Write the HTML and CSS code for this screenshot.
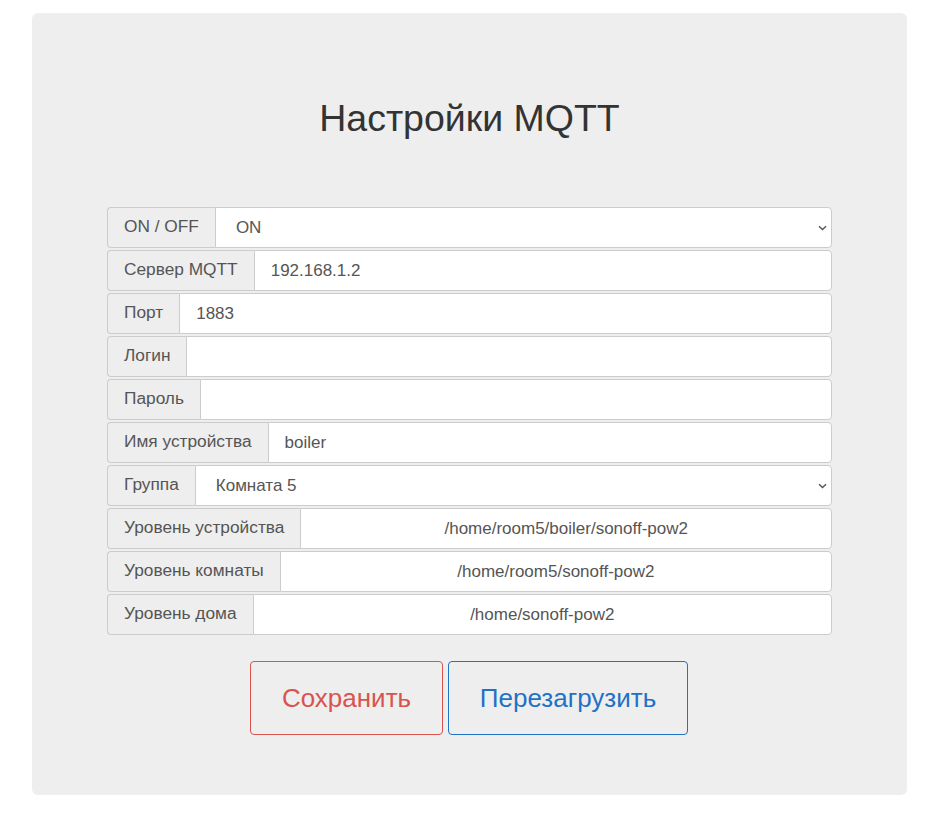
FILE: index.html
```html
<!DOCTYPE html>
<html lang="ru">
<head>
<meta charset="utf-8">
<title>Настройки MQTT</title>
<link rel="stylesheet" href="styles.css">
</head>
<body>
<div class="card">
  <h1 class="title">Настройки MQTT</h1>
  <div class="form">
    <div class="row">
      <span class="addon">ON / OFF</span>
      <div class="select-wrap">
        <select class="field select"><option>ON</option><option>OFF</option></select>
        <svg class="chev" width="9" height="6" viewBox="0 0 9 6"><path d="M1 1.2 L4.5 4.6 L8 1.2" fill="none" stroke="#555" stroke-width="1.4"/></svg>
      </div>
    </div>
    <div class="row">
      <span class="addon">Сервер MQTT</span>
      <input class="field" type="text" value="192.168.1.2">
    </div>
    <div class="row">
      <span class="addon">Порт</span>
      <input class="field" type="text" value="1883">
    </div>
    <div class="row">
      <span class="addon">Логин</span>
      <input class="field" type="text" value="">
    </div>
    <div class="row">
      <span class="addon">Пароль</span>
      <input class="field" type="password" value="">
    </div>
    <div class="row">
      <span class="addon">Имя устройства</span>
      <input class="field" type="text" value="boiler">
    </div>
    <div class="row">
      <span class="addon">Группа</span>
      <div class="select-wrap">
        <select class="field select"><option>Комната 5</option></select>
        <svg class="chev" width="9" height="6" viewBox="0 0 9 6"><path d="M1 1.2 L4.5 4.6 L8 1.2" fill="none" stroke="#555" stroke-width="1.4"/></svg>
      </div>
    </div>
    <div class="row">
      <span class="addon">Уровень устройства</span>
      <input class="field center" type="text" value="/home/room5/boiler/sonoff-pow2">
    </div>
    <div class="row">
      <span class="addon">Уровень комнаты</span>
      <input class="field center" type="text" value="/home/room5/sonoff-pow2">
    </div>
    <div class="row">
      <span class="addon">Уровень дома</span>
      <input class="field center" type="text" value="/home/sonoff-pow2">
    </div>
  </div>
  <div class="buttons">
    <button class="btn btn-save">Сохранить</button>
    <button class="btn btn-reboot">Перезагрузить</button>
  </div>
</div>
</body>
</html>
```

FILE: styles.css
```css
* { box-sizing: border-box; }
html, body { margin: 0; background: #fff; }
body {
  padding: 13px 26px 0 32px;
  font-family: "Liberation Sans", Arial, sans-serif;
  color: #333;
}
.card {
  background: #eeeeee;
  border-radius: 6px;
  height: 782px;
  padding: 84px 75px 0 75px;
}
.title {
  margin: 0;
  font-size: 37.5px;
  font-weight: 400;
  line-height: 42px;
  text-align: center;
  color: #333;
}
.form {
  margin-top: 68px;
  display: flex;
  flex-direction: column;
  gap: 2px;
}
.row {
  display: flex;
  height: 41px;
}
.addon {
  display: flex;
  align-items: center;
  padding: 0 16px 2px;
  background: #eeeeee;
  border: 1px solid #cccccc;
  border-right: 0;
  border-radius: 4px 0 0 4px;
  font-size: 17.3px;
  color: #555;
  white-space: nowrap;
}
.field {
  flex: 1;
  min-width: 0;
  height: 41px;
  margin: 0;
  padding: 0 16px;
  border: 1px solid #cccccc;
  border-radius: 0 4px 4px 0;
  background: #fff;
  font-family: "Liberation Sans", Arial, sans-serif;
  font-size: 17px;
  color: #555;
  outline: none;
}
.field.center { text-align: center; }
.select-wrap {
  flex: 1;
  display: flex;
  position: relative;
}
.select {
  -webkit-appearance: none;
  appearance: none;
  padding-left: 20px;
}
.chev {
  position: absolute;
  right: 5px;
  top: 18px;
  pointer-events: none;
}
.buttons {
  margin-top: 26px;
  padding-right: 1px;
  display: flex;
  justify-content: center;
  gap: 5px;
}
.btn {
  height: 74px;
  padding: 0 30px;
  background: transparent;
  border: 1px solid;
  border-radius: 4px;
  font-family: "Liberation Sans", Arial, sans-serif;
  font-size: 26px;
}
.btn-save { color: #d9534f; border-color: #d9534f; width: 193px; }
.btn-reboot { color: #1f72c6; border-color: #1f72c6; width: 240px; }
```
